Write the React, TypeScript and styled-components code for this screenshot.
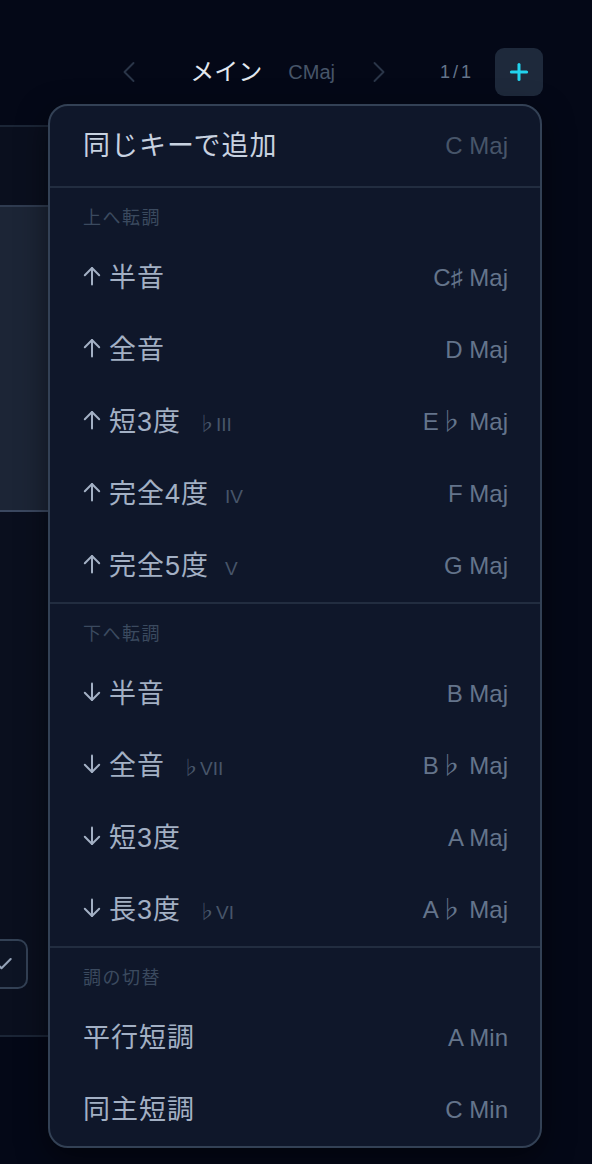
import styled, { createGlobalStyle } from "styled-components"
import { ChevronLeft, ChevronRight, Plus, Check } from "lucide-react"

const GlobalStyle = createGlobalStyle`
    html, body {
        margin: 0;
        padding: 0;
        background: #040817;
        overflow: hidden;
    }
    * { box-sizing: border-box; }
`

const FONT = `"Liberation Sans", "Noto Sans CJK JP", sans-serif`

const Page = styled.div`
    position: relative;
    width: 592px;
    height: 1164px;
    background: #040817;
    font-family: ${FONT};
    overflow: hidden;
`

const Toolbar = styled.div`
    display: flex;
    align-items: center;
    justify-content: flex-end;
    height: 48px;
    margin-top: 48px;
    padding-right: 49px;
    line-height: 30px;
`

const NavIcon = styled.span<{ $gap: number }>`
    display: flex;
    margin-left: ${p => p.$gap}px;
    color: #2a3548;
`

const SheetName = styled.span`
    margin-left: 43px;
    font-size: 24px;
    color: #e2e8f0;
`

const SheetKey = styled.span`
    margin-left: 26px;
    font-size: 20px;
    color: #475569;
`

const PageCount = styled.span`
    margin-left: 43px;
    font-size: 18px;
    letter-spacing: 3px;
    color: #64748b;
`

const AddButton = styled.button`
    display: flex;
    align-items: center;
    justify-content: center;
    width: 48px;
    height: 48px;
    margin-left: 21px;
    padding: 0;
    border: 0;
    border-radius: 9px;
    background: #1e293b;
    color: #22d3ee;
`

const Panel = styled.div`
    width: 470px;
    margin-top: 29px;
    background: #0a0f1e;
    border-top: 2px solid #1b2536;
    border-bottom: 2px solid #1b2536;
`

const PanelHead = styled.div`
    height: 78px;
`

const PanelSelected = styled.div`
    height: 307px;
    background: #1c2536;
    border-top: 2px solid #2f3b50;
    border-bottom: 2px solid #3b4860;
`

const PanelBody = styled.div`
    display: flex;
    align-items: flex-end;
    height: 523px;
    padding-bottom: 46px;
`

const CheckBox = styled.div`
    display: flex;
    align-items: center;
    justify-content: flex-end;
    width: 50px;
    height: 50px;
    margin-left: -22px;
    padding-right: 12px;
    border: 2px solid #334155;
    border-radius: 10px;
    background: #0d1424;
    color: #94a3b8;
`

const Menu = styled.div`
    position: absolute;
    top: 104px;
    left: 48px;
    width: 494px;
    padding-top: 4px;
    background: #0f172a;
    border: 2px solid #334155;
    border-radius: 20px;
    box-shadow: 0 10px 30px rgba(0, 0, 0, 0.5);
    overflow: hidden;
`

const TopSection = styled.div`
    padding-bottom: 4px;
`

const Divider = styled.div`
    height: 2px;
    background: #222d40;
`

const SectionTitle = styled.div`
    height: 54px;
    padding: 20px 33px 0;
    font-size: 18px;
    line-height: 20px;
    letter-spacing: 1.5px;
    color: #3b4a5f;
`

const Row = styled.div`
    display: flex;
    align-items: center;
    justify-content: space-between;
    height: 72px;
    padding: 0 32px 0 33px;
`

const Label = styled.div<{ $bright?: boolean }>`
    display: flex;
    align-items: baseline;
    height: 32px;
    font-size: 27px;
    line-height: 32px;
    letter-spacing: 1px;
    color: ${p => (p.$bright ? "#c8d2e0" : "#a3b0c4")};
`

const Arrow = styled.svg`
    flex: none;
    align-self: center;
    margin-right: 8px;
    margin-top: -4px;
`

const Degree = styled.span`
    margin-left: 16px;
    font-size: 19px;
    letter-spacing: 0;
    color: #475569;
`

const KeyName = styled.span<{ $dim?: boolean }>`
    height: 30px;
    font-size: 24px;
    line-height: 30px;
    color: ${p => (p.$dim ? "#475569" : "#64748b")};
`

const ArrowIcon = ({ down }: { down?: boolean }) => (
    <Arrow width="18" height="20" viewBox="0 0 18 20" fill="none" stroke="#a3b0c4" strokeWidth="2" strokeLinecap="round" strokeLinejoin="round">
        {down
            ? <><path d="M9 1.5V18" /><path d="M1.8 10.8L9 18l7.2-7.2" /></>
            : <><path d="M9 18.5V2" /><path d="M1.8 9.2L9 2l7.2 7.2" /></>}
    </Arrow>
)

type Item = { dir?: "up" | "down"; label: string; degree?: string; key: string }

const upItems: Item[] = [
    { dir: "up", label: "半音", key: "C♯ Maj" },
    { dir: "up", label: "全音", key: "D Maj" },
    { dir: "up", label: "短3度", degree: "♭III", key: "E♭ Maj" },
    { dir: "up", label: "完全4度", degree: "IV", key: "F Maj" },
    { dir: "up", label: "完全5度", degree: "V", key: "G Maj" },
]

const downItems: Item[] = [
    { dir: "down", label: "半音", key: "B Maj" },
    { dir: "down", label: "全音", degree: "♭VII", key: "B♭ Maj" },
    { dir: "down", label: "短3度", key: "A Maj" },
    { dir: "down", label: "長3度", degree: "♭VI", key: "A♭ Maj" },
]

const switchItems: Item[] = [
    { label: "平行短調", key: "A Min" },
    { label: "同主短調", key: "C Min" },
]

const MenuRow = ({ item }: { item: Item }) => (
    <Row>
        <Label>
            {item.dir && <ArrowIcon down={item.dir === "down"} />}
            {item.label}
            {item.degree && <Degree>{item.degree}</Degree>}
        </Label>
        <KeyName>{item.key}</KeyName>
    </Row>
)

const App = () => {
    return <Page>
        <GlobalStyle />
        <Toolbar>
            <NavIcon $gap={0}><ChevronLeft size={36} strokeWidth={1.3} /></NavIcon>
            <SheetName>メイン</SheetName>
            <SheetKey>CMaj</SheetKey>
            <NavIcon $gap={26}><ChevronRight size={36} strokeWidth={1.3} /></NavIcon>
            <PageCount>1/1</PageCount>
            <AddButton><Plus size={26} strokeWidth={2.8} /></AddButton>
        </Toolbar>
        <Panel>
            <PanelHead />
            <PanelSelected />
            <PanelBody>
                <CheckBox><Check size={20} strokeWidth={2.5} /></CheckBox>
            </PanelBody>
        </Panel>
        <Menu>
            <TopSection>
                <Row>
                    <Label $bright>同じキーで追加</Label>
                    <KeyName $dim>C Maj</KeyName>
                </Row>
            </TopSection>
            <Divider />
            <SectionTitle>上へ転調</SectionTitle>
            {upItems.map((item, i) => <MenuRow key={i} item={item} />)}
            <Divider />
            <SectionTitle>下へ転調</SectionTitle>
            {downItems.map((item, i) => <MenuRow key={i} item={item} />)}
            <Divider />
            <SectionTitle>調の切替</SectionTitle>
            {switchItems.map((item, i) => <MenuRow key={i} item={item} />)}
        </Menu>
    </Page>
}

export default App
